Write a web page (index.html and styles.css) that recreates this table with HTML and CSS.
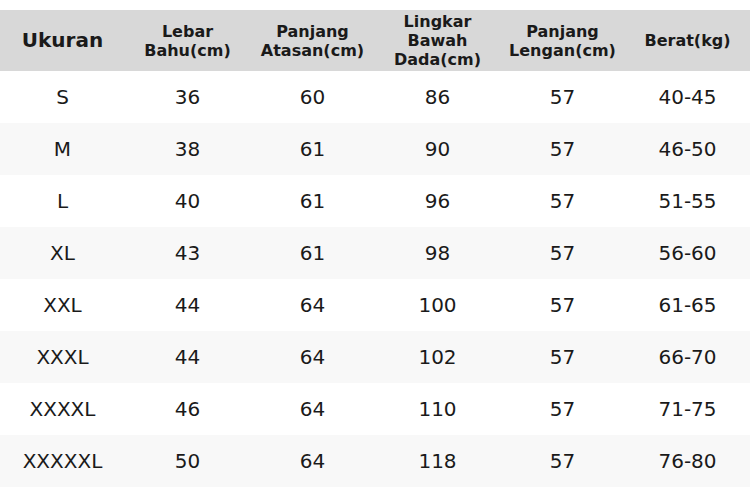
FILE: index.html
```html
<!DOCTYPE html>
<html>
<head>
<meta charset="utf-8">
<link rel="stylesheet" href="styles.css">
</head>
<body>
<div class="page">
<table class="size-table">
<thead>
<tr>
<th class="main">Ukuran</th>
<th>Lebar<br>Bahu(cm)</th>
<th>Panjang<br>Atasan(cm)</th>
<th>Lingkar<br>Bawah<br>Dada(cm)</th>
<th>Panjang<br>Lengan(cm)</th>
<th>Berat(kg)</th>
</tr>
</thead>
<tbody>
<tr><td>S</td><td>36</td><td>60</td><td>86</td><td>57</td><td>40-45</td></tr>
<tr><td>M</td><td>38</td><td>61</td><td>90</td><td>57</td><td>46-50</td></tr>
<tr><td>L</td><td>40</td><td>61</td><td>96</td><td>57</td><td>51-55</td></tr>
<tr><td>XL</td><td>43</td><td>61</td><td>98</td><td>57</td><td>56-60</td></tr>
<tr><td>XXL</td><td>44</td><td>64</td><td>100</td><td>57</td><td>61-65</td></tr>
<tr><td>XXXL</td><td>44</td><td>64</td><td>102</td><td>57</td><td>66-70</td></tr>
<tr><td>XXXXL</td><td>46</td><td>64</td><td>110</td><td>57</td><td>71-75</td></tr>
<tr><td>XXXXXL</td><td>50</td><td>64</td><td>118</td><td>57</td><td>76-80</td></tr>
</tbody>
</table>
</div>
</body>
</html>
```

FILE: styles.css
```css
html, body {
  margin: 0;
  padding: 0;
  background: #ffffff;
}
.page {
  padding-top: 10px;
  width: 750px;
}
.size-table {
  width: 750px;
  table-layout: fixed;
  border-collapse: collapse;
  font-family: "DejaVu Sans", sans-serif;
  color: #1a1a1a;
}
.size-table th {
  height: 61px;
  padding: 0;
  background: #d8d8d8;
  font-size: 16px;
  line-height: 19px;
  font-weight: bold;
  text-align: center;
  vertical-align: middle;
}
.size-table th.main {
  font-size: 20px;
}
.size-table td {
  height: 52px;
  padding: 0;
  font-size: 20px;
  text-align: center;
  vertical-align: middle;
}
.size-table tbody tr:nth-child(even) td {
  background: #f8f8f8;
}
```
